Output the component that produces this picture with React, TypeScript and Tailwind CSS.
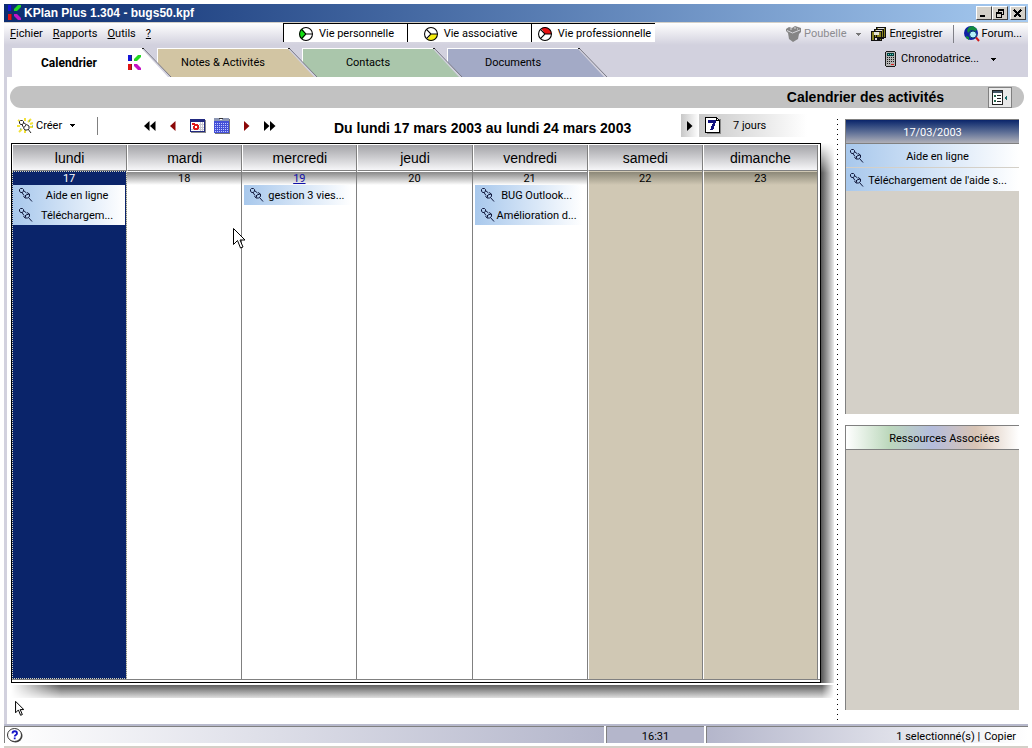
import React from 'react';

type Life = 'personal' | 'social' | 'work';

const tasks: Record<number, string[]> = {
  17: ['Aide en ligne', 'Téléchargem...'],
  19: ['gestion 3 vies...'],
  21: ['BUG Outlook...', 'Amélioration d...'],
};

const days = [
  { name: 'lundi', date: 17 },
  { name: 'mardi', date: 18 },
  { name: 'mercredi', date: 19 },
  { name: 'jeudi', date: 20 },
  { name: 'vendredi', date: 21 },
  { name: 'samedi', date: 22 },
  { name: 'dimanche', date: 23 },
];

const KLogo = () => (
  <svg width="14" height="16" viewBox="0 0 14 16" className="shrink-0">
    <path d="M0 0h4v6H0z" fill="#1414d8" />
    <path d="M0 9h4v6H0z" fill="#e01414" />
    <path d="M6 4l4-4h3v2L9 6H6z" fill="#22d822" />
    <path d="M6 9h3l4 4v2h-3L6 11z" fill="#c414c4" />
    <path d="M3 0h1v6H3zM3 9h1v6H3z" fill="#222" opacity=".5" />
  </svg>
);

const Pin = () => (
  <svg width="14" height="14" viewBox="0 0 14 14" fill="none" stroke="#10183c" className="shrink-0">
    <path d="M.5 1.5l1-1h2l1 1v1.500l-1 1.500h-2l-1-1.500z" />
    <path d="M4.5 2.500L7.500 5M3 4.500L5 7.500" />
    <path d="M8 4.500l2.500 1.500v2.500L8.500 10H6l-1.500-2M7 7l3-1M6.500 7v2.500" />
    <path d="M9.500 9.500l3.500 4" />
  </svg>
);

const CreateIcon = () => (
  <svg width="17" height="16" viewBox="0 0 17 16" fill="none" className="shrink-0">
    <path d="M8 0v3M1 2l3 2M14 1l-3 3M0 8h3M13 6l3-1M2 14l3-3M8 15v-3M13 9h3" stroke="#f2e23c" strokeWidth="2" />
    <path d="M2.5 3.500l1-1h2l1 1V5L5.500 6.500h-2L2.500 5z" fill="#fff" stroke="#222" />
    <path d="M6.5 4.500L9 6.500M5 6.500l1.500 3" stroke="#222" />
    <path d="M9.5 6.500L12 8v2.500L10.500 12H8l-1.500-2z" fill="#fff" stroke="#222" />
    <path d="M11 11l3 4" stroke="#222" />
    <path d="M12 3h1M15 8h1M3 11h1" stroke="#2a9a9a" />
  </svg>
);

const LifeIcon = ({ kind }: { kind: Life }) => (
  <svg width="14" height="14" viewBox="0 0 13 13" className="shrink-0">
    <circle cx="6.5" cy="6.5" r="6" fill="#fff" />
    {kind === 'personal' && <path d="M6.5 6.5L3 1.5a6 6 0 0 0 0 10z" fill="#12e012" />}
    {kind === 'social' && <path d="M6.5 6.5h6A6 6 0 0 1 3 11.5z" fill="#f6ee10" />}
    {kind === 'work' && <path d="M6.5 6.5L3 1.5a6 6 0 0 1 9.5 5z" fill="#e81010" />}
    <circle cx="6.5" cy="6.5" r="6" fill="none" stroke="#000" />
    <path d="M2.5 2.5l4 4-4 4M6.5 6.5h6" fill="none" stroke="#000" />
  </svg>
);

const Cursor = ({ small = false }: { small?: boolean }) => (
  <svg width={small ? 9 : 12} height={small ? 15 : 21} viewBox="0 0 12 21">
    <path d="M.5.5v16l4-4 3 7.5 2.500-1-3-7h5z" fill="#fff" stroke="#000" strokeWidth={small ? 1.4 : 1} />
  </svg>
);

const Caret = ({ color = '#000' }: { color?: string }) => (
  <svg width="5" height="3" viewBox="0 0 5 3" className="shrink-0" shapeRendering="crispEdges">
    <path d="M0 0h5v1H4v1H3v1H2V2H1V1H0z" fill={color} />
  </svg>
);

const Arrow = ({ color, left = false, double = false }: { color: string; left?: boolean; double?: boolean }) => (
  <svg width={double ? 12 : 6} height="10" viewBox={double ? '0 0 12 10' : '0 0 6 10'}>
    <g fill={color}>
      {left ? <path d="M5.5 0v10L0 5z" /> : <path d="M0 0v10l5.500-5z" />}
      {double && (left ? <path d="M11.5 0v10L6 5z" /> : <path d="M6 0v10l5.500-5z" />)}
    </g>
  </svg>
);

const TodayIcon = () => (
  <svg width="16" height="14" viewBox="0 0 16 14" shapeRendering="crispEdges">
    <path d="M1 1h15v13H1z" fill="#8a8a8a" />
    <path d="M0 0h15v13H0z" fill="#222a80" />
    <path d="M1 3h13v9H1z" fill="#fff" />
    <path d="M9 5.5h5M9 8.5h5M1 10.5h13M10.5 3v9M12.5 3v9" stroke="#c8c8d0" />
    <path d="M2 4h3v1h3v1h1v4H8v1H4v-1H3V7h1V6H2z" fill="#e01818" />
    <path d="M5 7h2v2H5z" fill="#fff" />
  </svg>
);

const MonthIcon = () => (
  <svg width="16" height="16" viewBox="0 0 16 16" shapeRendering="crispEdges">
    <path d="M1 1h15v15H1z" fill="#777" />
    <path d="M0 0h15v15H0z" fill="#4450d8" />
    <path d="M0 0h15v3H0z" fill="#8e98b4" />
    <path d="M5 0h4v1H5z" fill="#333" />
    <path d="M6 1h2v1H6z" fill="#fff" />
    <path d="M1 5.500h13M1 7.500h13M1 9.500h13M1 11.500h13M1 13.500h13" stroke="#c0c8ff" strokeDasharray="1 1" />
  </svg>
);

const WeekIcon = () => (
  <svg width="16" height="17" viewBox="0 0 16 17" shapeRendering="crispEdges">
    <path d="M2 2h14v15H2z" fill="#888" />
    <path d="M.5.5h11l3 3v12H.5z" fill="#fff" stroke="#000" />
    <path d="M11.5.5v3h3" fill="none" stroke="#000" />
    <path d="M3 3h8v2L8 13H5l3-7H3z" fill="#101080" />
  </svg>
);

const BinIcon = () => (
  <svg width="16" height="16" viewBox="0 0 16 16" className="shrink-0">
    <path d="M0 3l3-2 3 1 3-2 6 2v4l-2 2-1 5-5 3-4-3-1-6-2-2z" fill="#858585" />
    <path d="M1 4.500L6.500 7 14 4" stroke="#d8d8dc" fill="none" />
    <path d="M4 3h2M8 2h2M11 3h1" stroke="#d8d8dc" />
  </svg>
);

const DisksIcon = () => (
  <svg width="16" height="15" viewBox="0 0 16 15" shapeRendering="crispEdges" className="shrink-0">
    <g stroke="#111" fill="#8a8420">
      <path d="M5.500.5h9v10h-9zM3.500 2.500h9v9h-9zM.5 4.500h10v9H.5z" />
    </g>
    <path d="M3 5h5v3H3z" fill="#e8e8d8" />
    <path d="M3 10h6v4H3z" fill="#111" />
    <path d="M4 11h2v2H4z" fill="#ddd" />
    <path d="M7 1h6v1H7zM5 3h6v1H5z" fill="#ddd" />
  </svg>
);

const ForumIcon = () => (
  <svg width="16" height="16" viewBox="0 0 16 16" className="shrink-0">
    <circle cx="7" cy="7" r="7" fill="#1020a4" />
    <path d="M5 1l4-1 4 3-1 2-5-1-3 3-1-3zM2 10l3 1v3l-3-2z" fill="#128a3c" />
    <circle cx="9" cy="8.500" r="3.500" fill="#b4f0f8" stroke="#083c70" />
    <path d="M12 11.500l3 3.500" stroke="#d01818" strokeWidth="2" />
  </svg>
);

const CalculatorIcon = () => (
  <svg width="12" height="16" viewBox="0 0 12 16" shapeRendering="crispEdges" className="shrink-0">
    <path d="M1 0h9v1h1v14h-1v1H1v-1H0V1h1z" fill="#181818" />
    <path d="M1 1h9v14H1z" fill="#b4b4b4" />
    <path d="M2 2h7v3H2z" fill="#043c3c" />
    <path d="M3 3h1v1H3zM5 3h1v1H5zM7 3h1v1H7z" fill="#5cd8c8" />
    <path d="M2 6.500h8M2 8.500h8M2 10.500h8M2 12.500h4" stroke="#181818" strokeDasharray="1 1" />
    <path d="M6 13h3v1H6z" fill="#e02020" />
  </svg>
);

const PanelIcon = () => (
  <svg width="16" height="15" viewBox="0 0 16 15" shapeRendering="crispEdges">
    <path d="M.5.5h10v14H.5z" fill="#fff" stroke="#222" />
    <path d="M1 1h9v2H1z" fill="#456" />
    <path d="M2 5h2v2H2zM2 10h2v2H2z" fill="#286a50" />
    <path d="M5 5.500h4M5 8.500h4M5 11.500h4" stroke="#222" />
    <path d="M15 5v6l-3-3z" fill="#146868" />
  </svg>
);

const HelpIcon = () => (
  <svg width="16" height="15" viewBox="0 0 16 15">
    <ellipse cx="8.5" cy="8" rx="7" ry="6.500" fill="#444" />
    <ellipse cx="7.5" cy="7" rx="7" ry="6.500" fill="#fff" stroke="#333" />
    <path d="M5.5 5.500c0-3 4.500-3 4.500 0C10 7 7.700 7 7.700 8.500M7.700 9.500v1.800" fill="none" stroke="#1414c8" strokeWidth="1.800" />
  </svg>
);

const WindowButton = ({ label, children }: { label: string; children: React.ReactNode }) => (
  <button
    aria-label={label}
    className="flex h-3.5 w-4 items-center justify-center border border-t-white border-r-[#404040] border-b-[#404040] border-l-white bg-[#d4d0c8]"
  >
    <svg width="10" height="9" viewBox="0 0 10 9" fill="none" stroke="#000" shapeRendering="crispEdges">
      {children}
    </svg>
  </button>
);

const TitleBar = () => (
  <header className="flex h-[18px] items-center gap-0.5 bg-linear-to-r from-[#0c2c70] to-[#a6caf0] pr-0.5 pl-1">
    <KLogo />
    <h1 className="flex-1 font-['Liberation_Sans',sans-serif] text-xs font-bold text-white">KPlan Plus 1.304 - bugs50.kpf</h1>
    <div className="flex">
      <WindowButton label="Réduire"><path d="M1 7h5" strokeWidth="2" /></WindowButton>
      <WindowButton label="Restaurer"><path d="M3.5 3V.5h5v5H7M3 1.500h6M1.500 3.500h5v5h-5zM1 4.500h6" /></WindowButton>
    </div>
    <WindowButton label="Fermer"><path d="M1 1l7 7M8 1L1 8" strokeWidth="2" /></WindowButton>
  </header>
);

const lives: { kind: Life; label: string }[] = [
  { kind: 'personal', label: 'Vie personnelle' },
  { kind: 'social', label: 'Vie associative' },
  { kind: 'work', label: 'Vie professionnelle' },
];

const MenuBar = () => (
  <div className="flex h-[22px] items-start bg-linear-to-b from-white to-[#d2d1de]">
    <nav className="flex h-full w-[279px] items-center gap-2.5 pl-1.5">
      <button><u>F</u>ichier</button>
      <button><u>R</u>apports</button>
      <button><u>O</u>utils</button>
      <button><u>?</u></button>
    </nav>
    <div className="flex h-[19px]">
      {lives.map((life) => (
        <button
          key={life.kind}
          className="flex w-[124px] items-center justify-center gap-1.5 border-t border-l border-black bg-white pt-0.5 pl-0.5"
        >
          <LifeIcon kind={life.kind} />
          {life.label}
        </button>
      ))}
    </div>
    <div className="flex h-full flex-1 items-center justify-end pr-1.5">
      <button className="flex items-center gap-0.5 text-[#8c8c90]">
        <BinIcon />
        Poubelle
      </button>
      <button aria-label="Options de la poubelle" className="px-2.5"><Caret color="#777" /></button>
      <button className="flex items-center gap-0.5"><DisksIcon /><span>En<u>r</u>egistrer</span></button>
      <div className="mx-2.5 h-[18px] w-px bg-[#808088]" />
      <button className="flex items-center gap-0.5"><ForumIcon />Forum...</button>
    </div>
  </div>
);

const Slope = ({ fill }: { fill: string }) => (
  <svg width="32" height="29" viewBox="0 0 32 29" className="shrink-0">
    <path d="M0 0h1l28 29H0z" fill="#d2d1de" />
    <path d="M0 1l26 28H0z" fill={fill} />
    <path d="M1 0l28 29" stroke="#787884" />
    <path d="M0 0h2v1H0z" fill="#222" />
  </svg>
);

const Tabs = () => (
  <div className="flex h-8 items-end bg-[#d2d1de] pl-2">
    <button className="relative z-40 -mr-[17px] flex h-[29px]">
      <span className="flex w-[130px] items-center justify-between bg-white pl-[29px] text-xs font-bold">
        Calendrier
        <KLogo />
      </span>
      <Slope fill="#fff" />
    </button>
    <button className="relative z-30 -mr-[18px] flex h-[29px]">
      <span className="flex w-[131px] items-center justify-center border-t border-l border-white bg-[#d2c5a3]">Notes &amp; Activités</span>
      <Slope fill="#d2c5a3" />
    </button>
    <button className="relative z-20 -mr-[18px] flex h-[29px]">
      <span className="flex w-[131px] items-center justify-center border-t border-l border-white bg-[#aac6ab]">Contacts</span>
      <Slope fill="#aac6ab" />
    </button>
    <button className="relative z-10 flex h-[29px]">
      <span className="flex w-[131px] items-center justify-center border-t border-l border-white bg-[#a3aac6]">Documents</span>
      <Slope fill="#a3aac6" />
    </button>
    <div className="flex h-full flex-1 items-start justify-end pt-1.5 pr-8">
      <button className="flex items-center gap-1"><CalculatorIcon />Chronodatrice...</button>
      <button aria-label="Options" className="flex h-4 items-center pl-3"><Caret /></button>
    </div>
  </div>
);

const Toolbar = () => (
  <div className="flex h-[23px] items-center">
    <button className="flex items-center gap-0.5 pl-1.5"><CreateIcon />Créer</button>
    <button aria-label="Options de création" className="px-2"><Caret /></button>
    <div className="ml-3.5 h-[18px] w-px bg-[#808080]" />
    <div className="ml-[46px] flex items-center">
      <button aria-label="Premier" className="w-[26px]"><Arrow color="#000" left double /></button>
      <button aria-label="Précédent" className="w-5"><Arrow color="#8c0808" left /></button>
      <button aria-label="Aujourd'hui" className="w-6"><TodayIcon /></button>
      <button aria-label="Mois" className="w-[30px]"><MonthIcon /></button>
      <button aria-label="Suivant" className="w-5"><Arrow color="#8c0808" /></button>
      <button aria-label="Dernier" className="w-5"><Arrow color="#000" double /></button>
    </div>
    <h3 className="flex-1 pt-1 text-center font-['Liberation_Sans',sans-serif] text-sm font-bold">
      Du lundi 17 mars 2003 au lundi 24 mars 2003
    </h3>
    <div className="mr-4 flex h-full w-[140px] items-center bg-linear-to-r from-[#c0c0c0] to-white to-90%">
      <button aria-label="Période" className="flex h-full w-[18px] items-center justify-center bg-linear-to-r from-[#c8c8c8] to-white">
        <Arrow color="#000" />
      </button>
      <button className="ml-1.5 flex items-center gap-3"><WeekIcon />7 jours</button>
    </div>
  </div>
);

const Task = ({ title }: { title: string }) => (
  <div className="flex h-5 items-center bg-linear-to-r from-[#a8c8ec] to-white pr-1 pl-1.5 text-black">
    <Pin />
    <span className="flex-1 pt-0.5 text-center whitespace-nowrap">{title}</span>
  </div>
);

const dateBg = (date: number) => {
  if (date === 17) return 'bg-[#0a246a] text-white';
  if (date > 21) return 'bg-linear-to-b from-[#8c8878] to-[#d0c8b4]';
  return 'bg-linear-to-b from-[#888] to-white';
};

const columnBg = (date: number) => {
  if (date === 17) return 'border-r border-[#808080] bg-[#0a246a] outline-1 -outline-offset-1 outline-dotted outline-[#d8d8c0]';
  if (date > 21) return 'border-r border-l border-r-[#808080] border-l-white bg-[#d0c8b4]';
  return 'border-r border-[#808080] bg-white';
};

const Calendar = () => (
  <div className="relative flex-1">
    <div className="flex h-full flex-col border border-b-0 border-black bg-white">
      <div className="grid h-[27px] grid-cols-7 pt-px pr-0.5">
        {days.map((day) => (
          <div
            key={day.date}
            className="flex items-center justify-center border-r border-b border-l border-r-[#808080] border-b-[#808080] border-l-white bg-linear-to-b from-[#a4a4a8] to-[#f6f6f8] font-['Liberation_Sans',sans-serif] text-sm"
          >
            {day.name}
          </div>
        ))}
      </div>
      <div className="grid flex-1 grid-cols-7 border-b border-[#808080] pr-0.5">
        {days.map((day) => (
          <div key={day.date} className={columnBg(day.date)}>
            <div className={`mt-px h-[13px] text-center leading-[14px] ${dateBg(day.date)}`}>
              {day.date === 19 ? <a href="#19" className="text-[#1010a8] underline">19</a> : day.date}
            </div>
            <div className={day.date === 17 ? 'px-px' : 'pr-1 pl-0.5'}>
              {(tasks[day.date] ?? []).map((title) => <Task key={title} title={title} />)}
            </div>
          </div>
        ))}
      </div>
      <div className="h-[3px] border-b border-black" />
    </div>
    {/* drop shadow, right then bottom */}
    <div className="absolute top-0 bottom-0 left-full w-[13px] bg-linear-to-r from-[#555] to-[#eee] mask-t-from-[calc(100%-30px)]" />
    <div className="absolute top-full left-0 h-[15px] w-[calc(100%+13px)] border-t-2 border-white bg-linear-to-b from-[#606060] to-[#e0e0e0] mask-l-from-[calc(100%-50px)] mask-r-from-[calc(100%-12px)]" />
    <div className="absolute top-[85px] left-[222px]"><Cursor /></div>
  </div>
);

const SidePanels = () => (
  <aside className="mt-[11px] mr-[9px] mb-3.5 flex w-[174px] flex-col gap-[11px]">
    <section className="flex h-[295px] flex-col border-t border-l border-[#808080] bg-[#d4d0c8]">
      <h3 className="flex h-6 items-center justify-center border-b border-[#808080] bg-linear-to-b from-[#0a246a] to-[#b0b0b8] pt-0.5 text-white">
        17/03/2003
      </h3>
      <div className="flex flex-col gap-px">
        {['Aide en ligne', "Téléchargement de l'aide s..."].map((title) => (
          <div key={title} className="flex h-[23px] items-center bg-linear-to-r from-[#a8c8ec] to-white pr-2 pl-1">
            <Pin />
            <span className="flex-1 pt-0.5 text-center whitespace-nowrap">{title}</span>
          </div>
        ))}
      </div>
    </section>
    <section className="flex-1 border-t border-l border-[#808080] bg-[#d4d0c8]">
      <h3 className="flex h-6 items-center justify-center border-b border-[#808080] bg-[linear-gradient(to_right,white,#bcd8bc_25%,#b4bcdc_50%,#d8c4b4_75%,white)] pt-0.5 pl-6">
        Ressources Associées
      </h3>
    </section>
  </aside>
);

const StatusBar = () => (
  <footer className="flex h-5 gap-0.5 border-t-2 border-b border-t-[#b8bacd] border-b-white bg-white">
    <div className="flex flex-1 items-center border-t border-l border-[#808080] bg-linear-to-r from-white to-[#b4b6cb] pl-0.5">
      <button aria-label="Aide"><HelpIcon /></button>
    </div>
    <div className="flex w-[98px] items-center justify-center border-t border-l border-[#808080] bg-[#b4b6cb] pt-1">16:31</div>
    <div className="flex w-[322px] items-center justify-end gap-1 border-t border-l border-[#808080] bg-linear-to-r from-[#b4b6cb] to-white pt-1 pr-3">
      <span>1 selectionné(s) |</span>
      <span>Copier</span>
    </div>
  </footer>
);

const App: React.FC = () => {
  return (
    <div className="relative flex h-screen flex-col bg-white pt-1 pr-1 pl-1 font-[Roboto,'Liberation_Sans',sans-serif] text-[11px] leading-4 text-black">
      <TitleBar />
      <div className="h-px bg-[#d4d0c8]" />
      <MenuBar />
      <Tabs />
      <main className="flex min-h-0 flex-1 flex-col border-l-3 border-[#d2d1de] bg-white pt-[9px]">
        <div className="mr-1 ml-[3px] flex h-[22px] items-center justify-end rounded-full bg-[#c2c2c2] pr-3">
          <h2 className="pr-11 font-['Liberation_Sans',sans-serif] text-sm font-bold">Calendrier des activités</h2>
          <button aria-label="Afficher le panneau" className="flex h-[21px] w-6 items-center justify-center border border-[#808080] bg-[#e8e8e8]">
            <PanelIcon />
          </button>
        </div>
        <div className="flex min-h-0 flex-1">
          <div className="flex flex-1 flex-col pt-1.5 pb-[41px] pl-1">
            <Toolbar />
            <div className="mt-1.5 mr-4 flex flex-1"><Calendar /></div>
          </div>
          <div className="mt-[11px] mr-[7px] mb-1 w-px bg-[repeating-linear-gradient(to_bottom,black_0_1px,white_1px_5px)]" />
          <SidePanels />
        </div>
      </main>
      <div className="absolute bottom-8 left-[15px]"><Cursor small /></div>
      <StatusBar />
      <div className="mt-0.5 h-0.5 shrink-0 bg-[#d4d0c8]" />
    </div>
  );
};

export default App;
